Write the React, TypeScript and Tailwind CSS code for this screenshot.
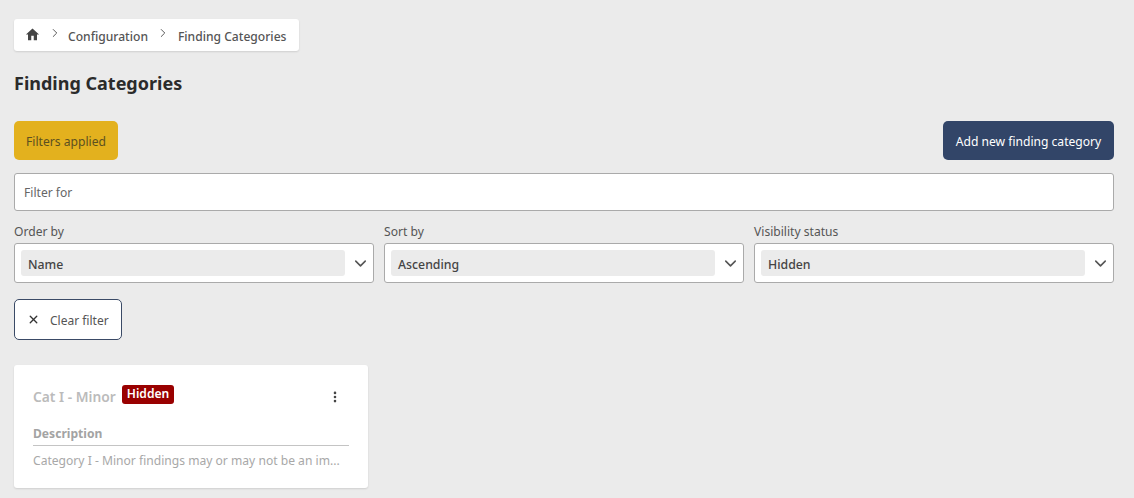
import { ChevronRight, ChevronDown, X, EllipsisVertical } from "lucide-react";

function Select({ label, value }: { label: string; value: string }) {
  return (
    <div className="flex flex-col">
      <div className="text-[12.1px] leading-[18px] text-[#555] mb-[2px] pt-[2px] -mt-[1px]">{label}</div>
      <div className="flex items-center h-10 bg-white border border-[#aaa] rounded-[3px] pl-[6px] pr-[3px]">
        <div className="flex-1 h-[26px] rounded-[3px] bg-[#ebebeb] flex items-center pl-[7px] pt-[5px] text-[12.3px] font-medium text-[#444]">{value}</div>
        <ChevronDown className="ml-[6px] w-[19px] h-[19px] text-[#555]" strokeWidth={2} />
      </div>
    </div>
  );
}

export default function App() {
  return (
    <div className="w-[1134px] h-[498px] overflow-hidden bg-[#ebebeb] pl-[14px] pr-[20px] pt-[19px] font-['Noto_Sans',sans-serif]">
      <div className="inline-flex items-center h-8 bg-white rounded-[3px] shadow-[0_1px_2px_rgba(0,0,0,0.12)] pl-3 pr-[13px] text-[12.1px] font-medium text-[#555]">
        <svg viewBox="0 0 24 24" className="w-[15px] h-[15px] fill-[#444] mr-[8px] -mt-[2px] -ml-[1px]"><path d="M10 21v-7h4v7h5.2v-9H22.5L12 2.5 1.5 12h3.3v9z" /></svg>
        <ChevronRight className="w-[14px] h-[14px] text-[#444] -mt-[5px]" strokeWidth={1.5} />
        <span className="ml-[6px] pt-[4px]">Configuration</span>
        <ChevronRight className="w-[14px] h-[14px] text-[#444] ml-[8px] -mt-[5px]" strokeWidth={1.5} />
        <span className="ml-[8px] pt-[4px]">Finding Categories</span>
      </div>
      <h1 className="mt-[18px] text-[18px] leading-[28px] font-bold text-[#2b2b2b]">Finding Categories</h1>
      <div className="mt-[24px] flex justify-between">
        <button className="h-[39px] w-[104px] pt-[3px] rounded-[5px] bg-[#e3b11e] text-[12.1px] text-[#5c5020]">Filters applied</button>
        <button className="h-[39px] w-[171px] pt-[3px] rounded-[5px] bg-[#324568] text-[12.1px] text-white">Add new finding category</button>
      </div>
      <div className="mt-[13px] h-[38px] flex items-center bg-white border border-[#aaa] rounded-[3px] px-[9px] pt-[2px] text-[12.1px] text-[#666]">Filter for</div>
      <div className="mt-[11px] grid grid-cols-3 gap-[10px]">
        <Select label="Order by" value="Name" />
        <Select label="Sort by" value="Ascending" />
        <Select label="Visibility status" value="Hidden" />
      </div>
      <button className="mt-4 flex items-center h-[41px] w-[108px] bg-white border border-[#3a4a66] rounded-[5px] pl-[12px] text-[12px] text-[#555]">
        <X className="w-[13px] h-[13px] text-[#333] mr-[10px]" strokeWidth={2.5} />
        <span className="pt-[3px]">Clear filter</span>
      </button>
      <div className="mt-[25px] w-[354px] h-[123px] bg-white rounded-[3px] shadow-[0_1px_2px_rgba(0,0,0,0.12)] pl-[19px] pr-[19px] pt-5">
        <div className="flex items-center h-5">
          <span className="text-[13.8px] font-semibold text-[#bbb] mt-[4px]">Cat I - Minor</span>
          <span className="ml-[6px] h-[19px] -mt-[2px] px-[5px] flex items-center rounded-[3px] bg-[#990000] text-[12.1px] font-semibold text-white">Hidden</span>
          <EllipsisVertical className="ml-auto mr-[7px] mt-[4px] w-[14px] h-[14px] text-[#444]" strokeWidth={2.5} />
        </div>
        <div className="mt-[19px] pt-[1px] text-[12.1px] leading-[17px] font-bold text-[#a3a3a3] pb-[3px] border-b border-[#c4c4c4]">Description</div>
        <div className="mt-[6px] text-[12.1px] leading-[18px] text-[#a8a8a8] whitespace-nowrap">Category I - Minor findings may or may not be an im...</div>
      </div>
    </div>
  );
}
